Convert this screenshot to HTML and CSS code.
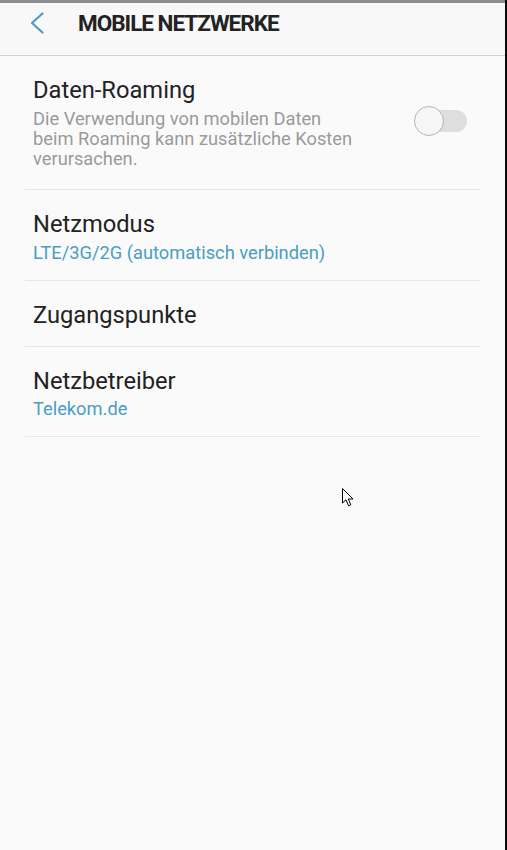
FILE: index.html
```html
<!DOCTYPE html>
<html lang="de">
<head>
<meta charset="utf-8">
<title>Mobile Netzwerke</title>
<link rel="stylesheet" href="styles.css">
</head>
<body>
<div class="device">
  <div class="phone">
    <div class="statusline"></div>
    <header class="appbar">
      <svg class="back" width="14" height="22" viewBox="0 0 14 22" aria-hidden="true">
        <path d="M12.5 1.5 L2 11 L12.5 20.5" fill="none" stroke="#4b9ec0" stroke-width="2.2" stroke-linecap="round" stroke-linejoin="round"/>
      </svg>
      <h1 class="title">MOBILE NETZWERKE</h1>
    </header>
    <ul class="list">
      <li class="item item-toggle">
        <div class="texts">
          <div class="label">Daten-Roaming</div>
          <div class="desc">Die Verwendung von mobilen Daten beim Roaming kann zusätzliche Kosten verursachen.</div>
        </div>
        <div class="switch"><span class="track"></span><span class="knob"></span></div>
      </li>
      <li class="item">
        <div class="label">Netzmodus</div>
        <div class="value">LTE/3G/2G (automatisch verbinden)</div>
      </li>
      <li class="item">
        <div class="label">Zugangspunkte</div>
      </li>
      <li class="item">
        <div class="label">Netzbetreiber</div>
        <div class="value">Telekom.de</div>
      </li>
    </ul>
    <svg class="cursor" width="13" height="20" viewBox="0 0 13 20" aria-hidden="true">
      <path d="M0.5 0.5 L0.5 15 L4 11.8 L6.6 17.8 L8.8 16.8 L6.3 11 L11 11 Z" fill="#fff" stroke="#000" stroke-width="1"/>
    </svg>
  </div>
  <div class="edge"></div>
</div>
</body>
</html>
```

FILE: styles.css
```css
html, body {
  margin: 0;
  padding: 0;
  background: #fafafa;
}
body {
  font-family: Roboto, "Noto Sans", "Liberation Sans", sans-serif;
  color: #222;
}
.device {
  display: flex;
  width: 507px;
  height: 850px;
  overflow: hidden;
}
.phone {
  flex: 1;
  position: relative;
  background: #fafafa;
}
.edge {
  width: 2px;
  background: #0a0a0a;
}
.statusline {
  height: 3px;
  background: #8e8e8e;
}
.appbar {
  display: flex;
  align-items: flex-start;
  height: 52px;
  border-bottom: 1px solid #d3d3d3;
  background: #f8f8f8;
  padding-left: 30px;
}
.back {
  display: block;
  margin-top: 9px;
}
.title {
  margin: 7px 0 0 34px;
  font-size: 22.5px;
  font-weight: 700;
  letter-spacing: -1px;
  color: #222;
  line-height: 26px;
}
.list {
  list-style: none;
  margin: 0 25px;
  padding: 0;
}
.item {
  padding: 20px 8px 17px;
  border-bottom: 1px solid #e6e6e6;
}
.item-toggle {
  display: flex;
  align-items: center;
  padding-top: 20px;
  padding-bottom: 20px;
}
.texts {
  flex: 1;
}
.label {
  font-size: 23.7px;
  line-height: 28px;
  color: #222;
}
.desc {
  margin-top: 5px;
  font-size: 18.3px;
  line-height: 20px;
  color: #9a9a9a;
  max-width: 326px;
}
.value {
  margin-top: 3.5px;
  font-size: 18.3px;
  line-height: 21px;
  color: #4a9ec2;
}
.switch {
  position: relative;
  width: 53px;
  height: 30px;
  margin-right: 5px;
  margin-bottom: 4px;
}
.track {
  position: absolute;
  left: 4px;
  top: 4px;
  width: 49px;
  height: 22px;
  border-radius: 11px;
  background: #dedede;
}
.knob {
  position: absolute;
  left: 0;
  top: 0;
  width: 28px;
  height: 28px;
  border-radius: 50%;
  background: #f6f6f6;
  border: 1px solid #b4b4b4;
}
.cursor {
  position: absolute;
  left: 342px;
  top: 488px;
}
```
